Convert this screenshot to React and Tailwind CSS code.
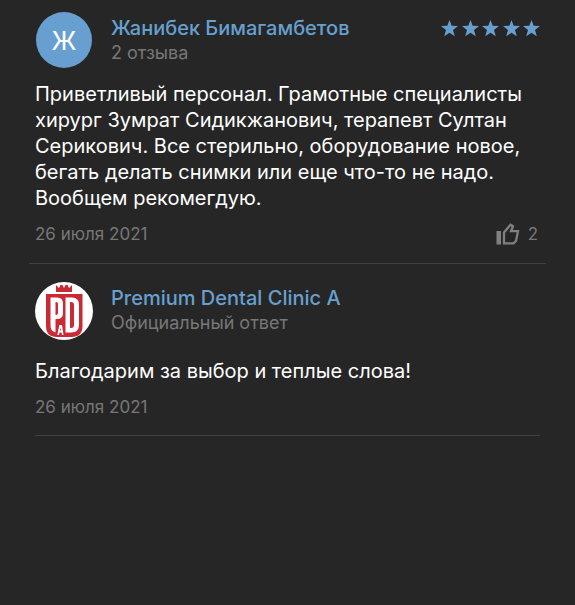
const STARS = [1, 2, 3, 4, 5];

function Star() {
  return (
    <svg viewBox="0 0 18 18" className="size-[17px] fill-[#67a0d0]" aria-hidden="true">
      <path d="M9 0 11.300 6.100 18 6.400 12.700 10.600 14.600 17.300 9 13.500 3.400 17.300 5.300 10.600 0 6.400 6.700 6.100Z" />
    </svg>
  );
}

function ThumbUp() {
  return (
    <svg viewBox="0 0 24 22" className="h-[22px] w-6" aria-hidden="true">
      <path d="M0.500 8H5V21.500H0.500Z" fill="#808080" />
      <path
        d="M8 9.500 14.500 1.800 17 3.200 15 8.200H22L20 18 17.500 20.300H8Z"
        fill="none"
        stroke="#808080"
        strokeWidth="2.300"
        strokeLinejoin="miter"
      />
    </svg>
  );
}

function ClinicLogo() {
  return (
    <svg viewBox="0 0 58 58" className="size-[58px] shrink-0" role="img" aria-label="Premium Dental Clinic">
      <circle cx="29" cy="29" r="29" fill="#fff" />
      <path d="M21 3 24 6 25.500 3H27.500L29 6 30.500 3H32.500L34 6 37 3V10H21Z" fill="#c92a35" />
      <path d="M11 12H47.500V44Q47.500 55 36.500 55H22Q11 55 11 44Z" fill="#c92a35" />
      <path
        fillRule="evenodd"
        d="M15.500 15.500H22Q28 15.500 28 21.500V31Q28 37 22 37H20.500V50.500Q15.500 49 15.500 44ZM20.500 20V33H21Q23 33 23 31V22Q23 20 21 20Z"
        fill="#fff"
      />
      <path
        fillRule="evenodd"
        d="M30.500 15.500H37Q44 15.500 44 23V43Q44 50.500 36.500 50.500H30.500ZM35 20V46H36Q39 46 39 43V23Q39 20 36 20Z"
        fill="#fff"
      />
      <path fillRule="evenodd" d="M24.300 43H27L28.500 53H27L26.500 50.500H24.500L24 53H22.300ZM25.500 45.500 25 48.500H26Z" fill="#fff" />
    </svg>
  );
}

function Person({ avatar, name, note, children }) {
  return (
    <header className="flex items-start">
      <div className="flex w-[76px] shrink-0">{avatar}</div>
      <div className="min-w-0 flex-1 pt-1">
        <h2 className="text-[20px] leading-6 font-medium">
          <a href="#profile" className="text-[#67a0d0]">{name}</a>
        </h2>
        <p className="text-[18px] leading-[26px] text-[#777]">{note}</p>
      </div>
      {children}
    </header>
  );
}

export default function App() {
  return (
    <main className="min-h-screen bg-[#262626] font-['Inter','Liberation_Sans',sans-serif] text-white">
      <article className="px-[35px] pt-3">
        <Person
          name="Жанибек Бимагамбетов"
          note="2 отзыва"
          avatar={
            <div className="ml-px flex size-14 items-center justify-center rounded-full bg-[#67a0d0] text-[26px]">
              Ж
            </div>
          }
        >
          <div className="flex w-[99px] justify-between pt-2" role="img" aria-label="5 из 5">
            {STARS.map((n) => <Star key={n} />)}
          </div>
        </Person>
        <p className="mt-[13px] text-[20px] leading-[26px]">
          Приветливый персонал. Грамотные специалисты хирург Зумрат Сидикжанович, терапевт Султан
          Серикович. Все стерильно, оборудование новое, бегать делать снимки или еще что-то не надо.
          Вообщем рекомегдую.
        </p>
        <footer className="mt-[9px] flex items-center justify-between text-[17px] leading-7 text-[#777]">
          <time dateTime="2021-07-26">26 июля 2021</time>
          <button type="button" className="flex items-center gap-2 pr-0.5" aria-label="Полезно, 2">
            <ThumbUp />
            <span>2</span>
          </button>
        </footer>
      </article>
      <hr className="mx-[29px] mt-[15px] border-[#404040]" />
      <article className="mx-[35px] border-b border-[#404040] pt-[18px] pb-[14px]">
        <Person name="Premium Dental Clinic A" note="Официальный ответ" avatar={<ClinicLogo />} />
        <p className="mt-[18px] text-[20px] leading-[26px]">Благодарим за выбор и теплые слова!</p>
        <footer className="mt-[9px] text-[17px] leading-7 text-[#777]">
          <time dateTime="2021-07-26">26 июля 2021</time>
        </footer>
      </article>
    </main>
  );
}
